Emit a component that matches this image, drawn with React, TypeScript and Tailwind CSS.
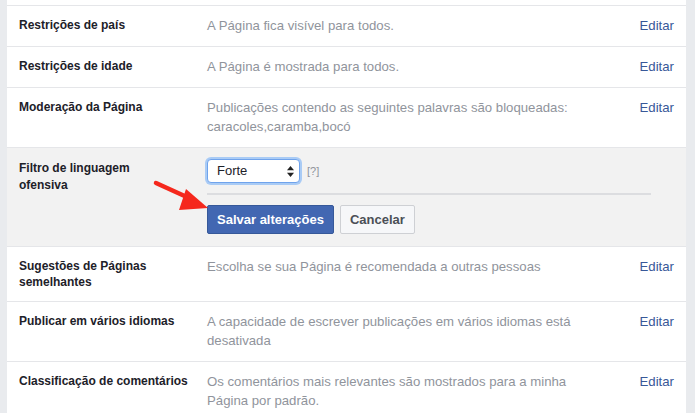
import React from 'react';

type Row = {
  label: string;
  desc: string;
};

const topRows: Row[] = [
  { label: 'Restrições de país', desc: 'A Página fica visível para todos.' },
  { label: 'Restrições de idade', desc: 'A Página é mostrada para todos.' },
  {
    label: 'Moderação da Página',
    desc: 'Publicações contendo as seguintes palavras são bloqueadas: caracoles,caramba,bocó',
  },
];

const bottomRows: Row[] = [
  { label: 'Sugestões de Páginas semelhantes', desc: 'Escolha se sua Página é recomendada a outras pessoas' },
  {
    label: 'Publicar em vários idiomas',
    desc: 'A capacidade de escrever publicações em vários idiomas está desativada',
  },
  {
    label: 'Classificação de comentários',
    desc: 'Os comentários mais relevantes são mostrados para a minha Página por padrão.',
  },
];

function SettingRow({ row }: { row: Row }) {
  return (
    <div className="flex items-start border-b border-[#e5e6e9] bg-white px-[12px] pt-[10px] pb-[11px]">
      <div className="w-[188px] shrink-0 pr-3 pt-[1px] text-[12px] font-bold leading-[16px] text-[#1d2129]">
        {row.label}
      </div>
      <div className="w-[395px] text-[13.2px] leading-[19px] text-[#90949c]">{row.desc}</div>
      <a className="ml-auto text-[13.2px] leading-[19px] text-[#385898]">Editar</a>
    </div>
  );
}

function Arrow() {
  return (
    <svg className="pointer-events-none absolute left-[151px] top-[176px]" width="62" height="38" viewBox="0 0 62 38">
      <line x1="5" y1="7" x2="38" y2="22" stroke="#f5281d" strokeWidth="4.5" strokeLinecap="round" />
      <polygon points="35,13 57,32 28,34" fill="#f5281d" />
    </svg>
  );
}

export default function App() {
  return (
    <div
      className="relative min-h-[413px] overflow-hidden bg-[#e9ebee] pl-[7px] pr-[9px]"
      style={{ fontFamily: '"Liberation Sans", Arial, sans-serif' }}
    >
      <div className="h-[6px] border-b border-[#e5e6e9] bg-white" />
      {topRows.map((r) => (
        <SettingRow key={r.label} row={r} />
      ))}

      {/* linha em edição */}
      <div className="flex border-b border-[#e5e6e9] bg-[#f2f2f2] px-[12px] pt-[11px] pb-[12px]">
        <div className="w-[188px] shrink-0 pr-3 pt-[1px] text-[12px] font-bold leading-[17px] text-[#1d2129]">
          Filtro de linguagem
          <br />
          ofensiva
        </div>
        <div className="flex-1 pr-[23px]">
          <div className="flex items-center gap-[7px]">
            <div className="flex h-[24px] w-[93px] items-center justify-between rounded-[4px] border border-[#6fa3ec] bg-white pl-[9px] pr-[5px] text-[13px] text-[#1d2129] shadow-[0_0_0_2px_#a9cbf5]">
              <span>Forte</span>
              <svg width="7" height="11" viewBox="0 0 7 11">
                <polygon points="3.5,0 7,4.3 0,4.3" fill="#222" />
                <polygon points="0,6.7 7,6.7 3.5,11" fill="#222" />
              </svg>
            </div>
            <span className="text-[11px] text-[#90949c]">[?]</span>
          </div>
          <div className="mt-[10px] h-[2px] bg-[#dcdde0]" />
          <div className="mt-[10px] flex gap-[6px]">
            <button className="h-[29px] rounded-[2px] border border-[#365899] bg-[#4267b2] px-[9px] text-[13px] font-bold text-white">
              Salvar alterações
            </button>
            <button className="h-[29px] rounded-[2px] border border-[#ced0d4] bg-[#f6f7f9] px-[9px] text-[13px] font-bold text-[#4b4f56]">
              Cancelar
            </button>
          </div>
        </div>
      </div>

      {bottomRows.map((r) => (
        <SettingRow key={r.label} row={r} />
      ))}

      <Arrow />
    </div>
  );
}
